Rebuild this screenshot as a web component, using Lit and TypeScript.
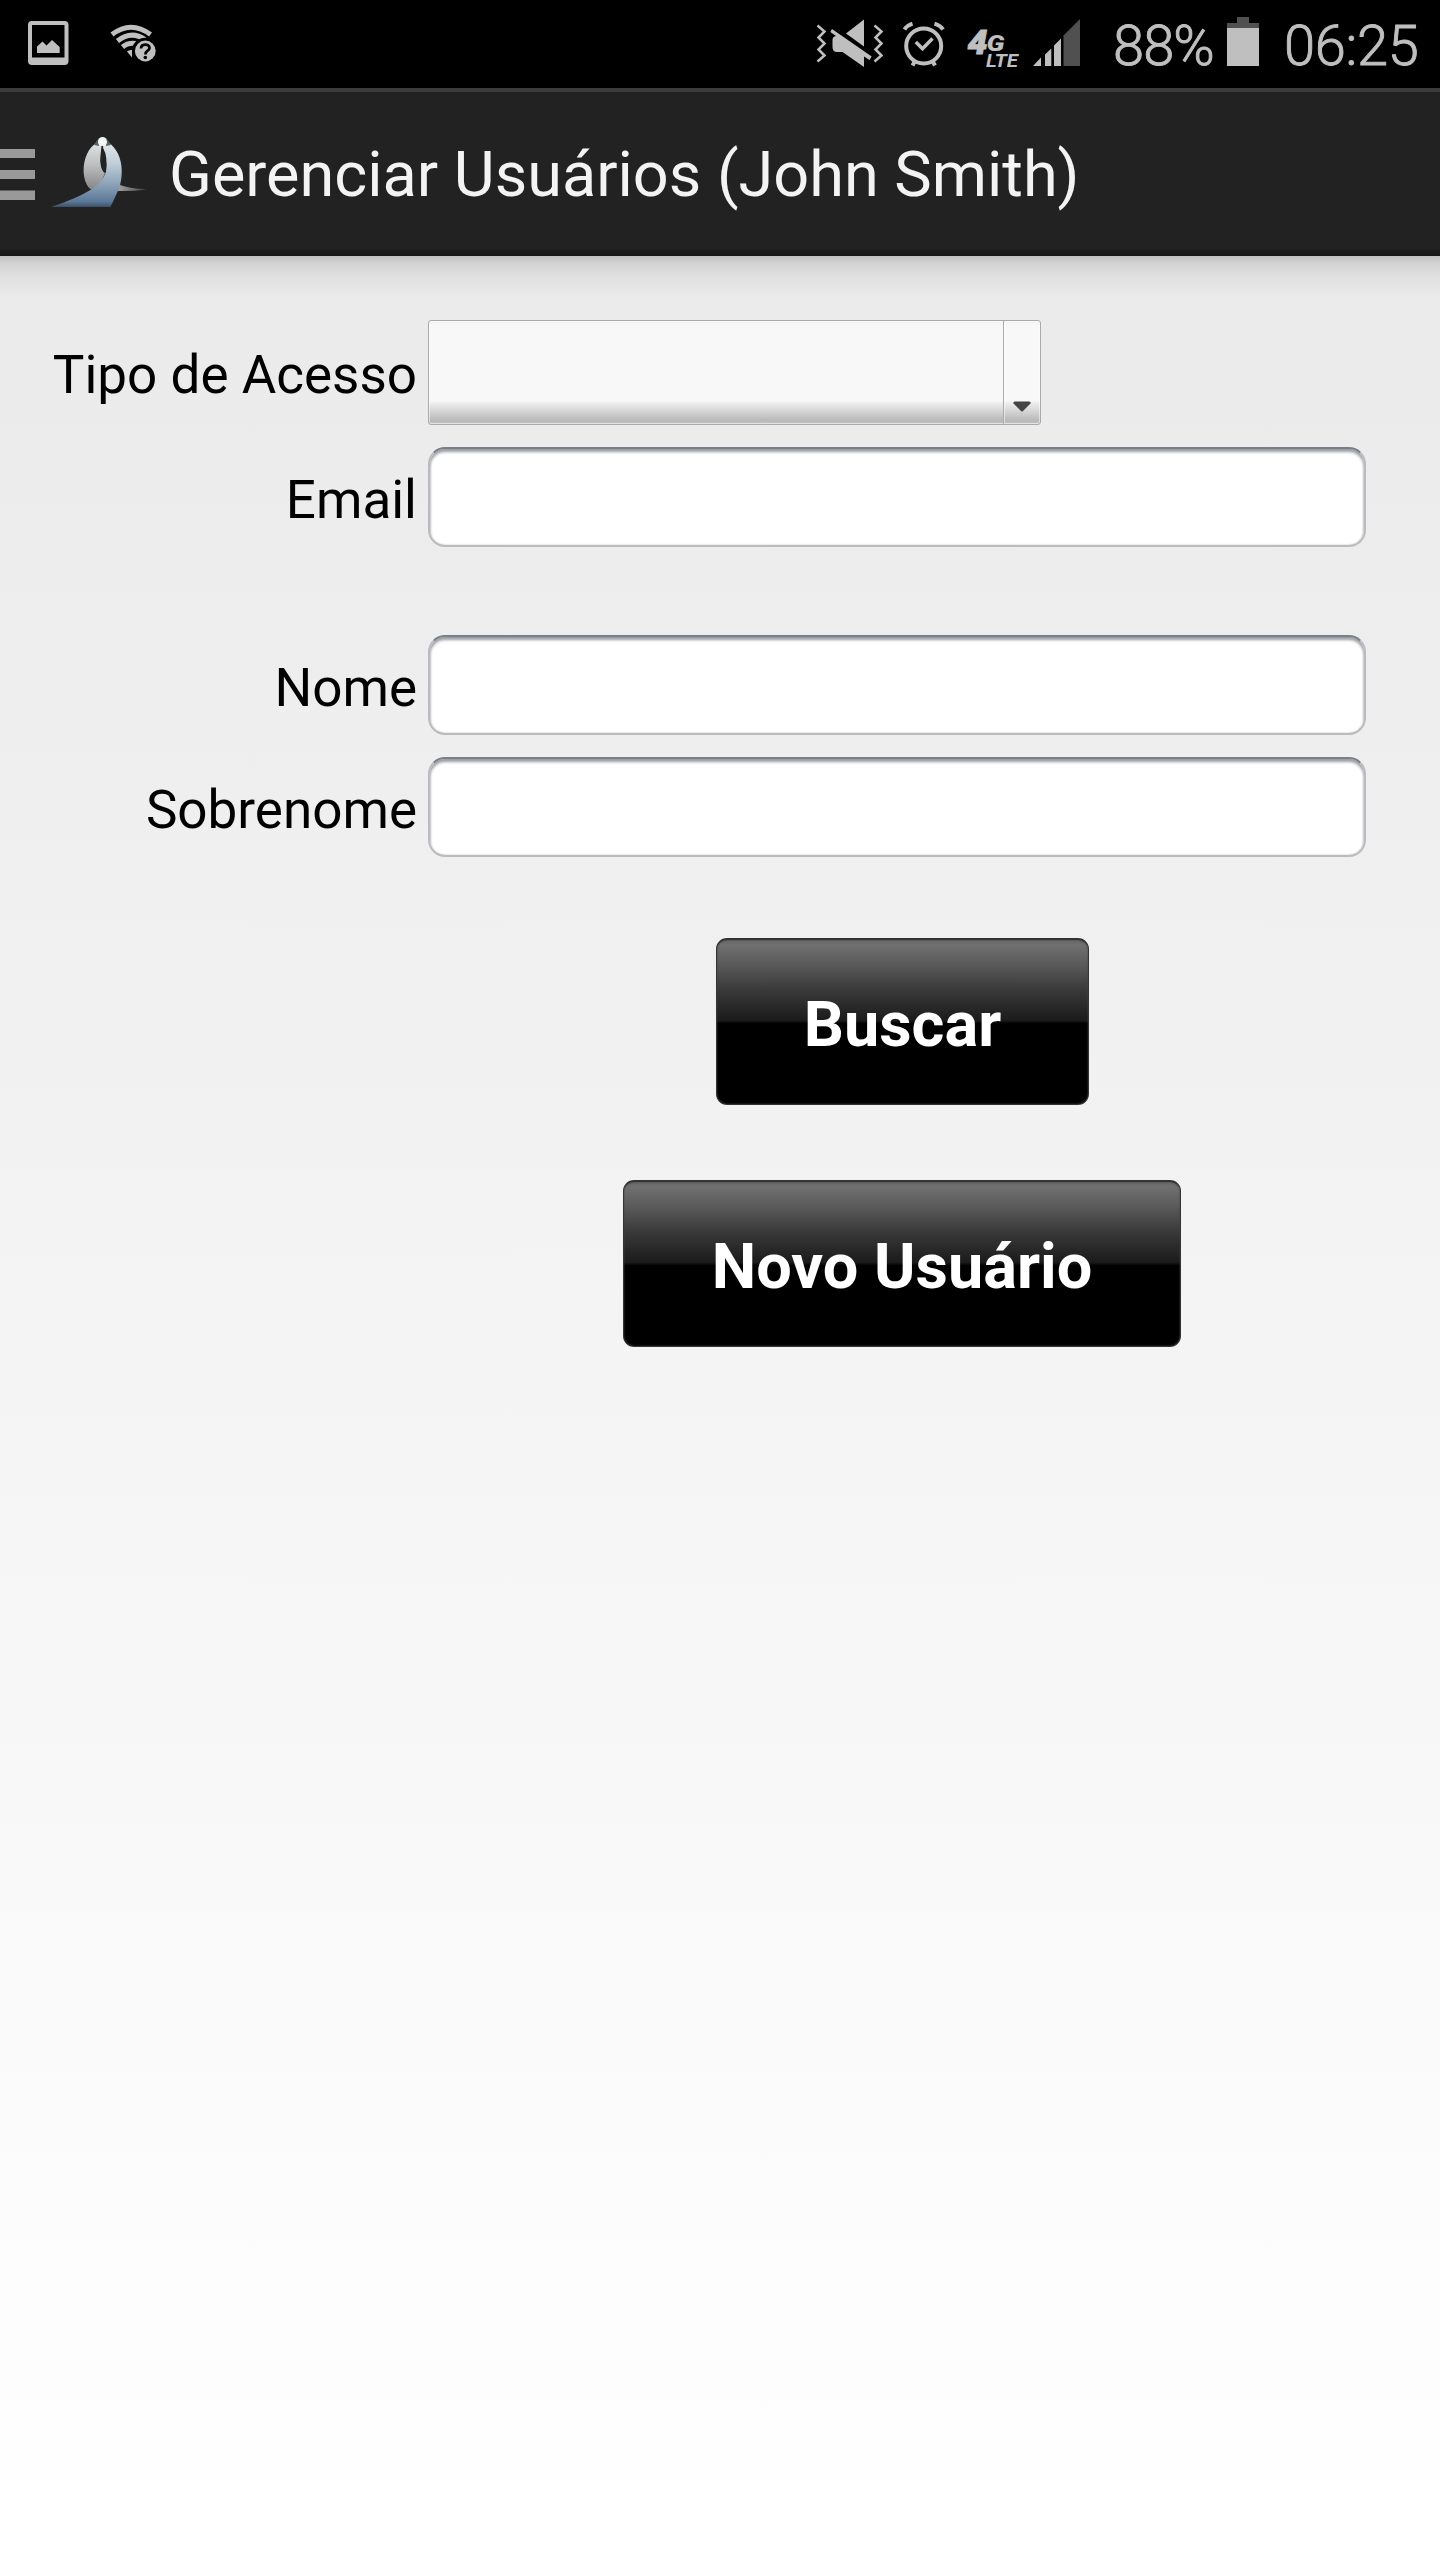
import { LitElement, html, css } from "lit";
import { customElement, property } from "lit/decorators.js";

@customElement("status-bar")
class StatusBar extends LitElement {
  static styles = css`
    :host { display: flex; height: 88px; box-sizing: border-box; background: #000; color: #bfbfbf; align-items: flex-start; justify-content: space-between; font-family: Roboto, sans-serif; }
    .side { display: flex; height: 88px; }
    .readout { font-size: 56px; line-height: 88px; white-space: nowrap; padding-top: 2px; font-weight: 300; box-sizing: border-box; -webkit-text-stroke: 0.9px #bfbfbf; }
    .level { width: 102px; margin-left: 12px; padding-left: 3px; letter-spacing: -0.9px; }
    .clock { width: 156px; letter-spacing: -0.3px; }
    svg { display: block; flex: none; }
    .net { font-family: Roboto, sans-serif; font-weight: 900; font-style: italic; }
  `;

  render() {
    return html`
      <div class="side">
        <svg width="170" height="88" viewBox="0 0 170 88">
          <rect x="30" y="23" width="36.5" height="40" rx="2" fill="none" stroke="#bfbfbf" stroke-width="4"/>
          <path d="M30 57.5H67V62a2 2 0 0 1-2 2H32a2 2 0 0 1-2-2Z" fill="#bfbfbf"/>
          <path d="M37 53V46.5L42.5 41.5L46.5 45.5L52 40L59.700 47V53Z" fill="#bfbfbf"/>
          <g fill="none" stroke="#bfbfbf" stroke-width="5">
            <path d="M112 34.500Q131 20 150.500 34.500"/>
            <path d="M117.500 41Q131 30 145 39.500"/>
            <path d="M122.500 47Q128 42.300 136 43.500"/>
          </g>
          <path d="M127 51.500Q129 49.500 132 50V57.500Z" fill="#bfbfbf"/>
          <circle cx="145.300" cy="51" r="13.300" fill="#000"/>
          <circle cx="145.300" cy="51" r="10.400" fill="#bfbfbf"/>
          <path d="M141 48.500C141 43.500 149.500 43.500 149.500 48C149.500 51 145.400 50.500 145.400 54.500" fill="none" stroke="#000" stroke-width="2.700"/>
          <circle cx="145.300" cy="57.500" r="1.800" fill="#000"/>
        </svg>
      </div>
      <div class="side">
        <svg width="288" height="88" viewBox="810 0 288 88">
          <g fill="none" stroke="#bfbfbf" stroke-width="2.500">
            <path d="M817.500 25.500L824.500 31.500L818.500 37.500L824.500 43.500L818.500 49.500L824.500 55.500L817.500 61.500"/>
            <path d="M874.500 25.500L881.500 31.500L875.500 37.500L881.500 43.500L875.500 49.500L881.500 55.500L874.500 61.500"/>
          </g>
          <path d="M846 33.500L864 19.500V46.500Z" fill="#bfbfbf"/>
          <path d="M832 29L871.700 56.500L869.500 60L864 56.500V67L842.500 52H837Q832.500 52 832.500 47V40Q832.500 36.500 836 36L830.300 32Z" fill="#bfbfbf"/>
          <g fill="none" stroke="#bfbfbf">
            <circle cx="923.700" cy="46" r="17.500" stroke-width="4"/>
            <path d="M904.500 29.500Q907 25.500 912.500 23.700M943 29.500Q940.500 25.500 934.500 23.700" stroke-width="4"/>
            <path d="M915 61L912.500 65.500M932.500 61L935 65.500" stroke-width="4"/>
            <path d="M915.800 42L922.500 48.700L932.500 38.500" stroke-width="3.500"/>
          </g>
          <g class="net" fill="#bfbfbf">
            <text x="967.500" y="53.500" font-size="34" textLength="20" lengthAdjust="spacingAndGlyphs" stroke="#bfbfbf">4</text>
            <text x="986.500" y="50.500" font-size="22" textLength="18" lengthAdjust="spacingAndGlyphs">G</text>
            <text x="986" y="67" font-size="18.500" font-weight="700" textLength="32" lengthAdjust="spacingAndGlyphs">LTE</text>
          </g>
          <path d="M1033 66L1041 57.500V66ZM1045 54.500L1051.300 48.500V66H1045ZM1054 45.500L1061 38.500V66H1054Z" fill="#bfbfbf"/>
          <path d="M1063.500 35.500L1080 19V66H1063.500Z" fill="#505050"/>
        </svg>
        <div class="readout level">88%</div>
        <svg width="72" height="88" viewBox="1212 0 72 88">
          <path d="M1237 17H1249V23H1259V28H1227V23H1237Z" fill="#505050"/>
          <path d="M1227 28H1259V66H1227Z" fill="#bfbfbf"/>
        </svg>
        <div class="readout clock">06:25</div>
      </div>
    `;
  }
}

@customElement("action-bar")
class ActionBar extends LitElement {
  @property() heading = "";

  static styles = css`
    :host { display: flex; height: 168px; box-sizing: border-box; background: linear-gradient(#3c3c3c 0 4px, #222 4px 161px, #1b1b1b 163px 166px, #151515); font-family: Roboto, sans-serif; }
    svg { display: block; flex: none; }
    .heading { font-size: 63px; line-height: 168px; color: #f3f3f3; white-space: nowrap; padding-top: 3px; box-sizing: border-box; }
  `;

  render() {
    return html`
      <svg width="169" height="168" viewBox="0 88 169 168">
        <defs>
          <linearGradient id="robe" x1="0" y1="0" x2="0" y2="1">
            <stop offset="0" stop-color="#e6eaec"/>
            <stop offset=".35" stop-color="#c0ced9"/>
            <stop offset=".7" stop-color="#849cb3"/>
            <stop offset=".92" stop-color="#5a7898"/>
            <stop offset="1" stop-color="#3c5066"/>
          </linearGradient>
          <linearGradient id="wing" x1="0" y1="0" x2="0" y2="1">
            <stop offset="0" stop-color="#e4e8e8"/>
            <stop offset=".5" stop-color="#bcbec0"/>
            <stop offset="1" stop-color="#858486"/>
          </linearGradient>
          <linearGradient id="tail" x1="0" y1="0" x2="1" y2="0">
            <stop offset="0" stop-color="#aaa"/>
            <stop offset="1" stop-color="#444"/>
          </linearGradient>
        </defs>
        <path d="M0 149H35V158H0ZM0 170H35V179H0ZM0 190.500H35V200H0Z" fill="#999"/>
        <path d="M117 184Q129 188.500 147 189.500Q132 191.500 115 191Z" fill="url(#tail)"/>
        <path d="M102 140C79 148 80 184 92 190Q101 185 105 173C98 168 101 154 102 140Z" fill="url(#wing)"/>
        <path d="M104 140C126 150 124 180 117 193L110.500 207H51Q78 198 92 189Q102 182 106 172Q108 156 103 148Z" fill="url(#robe)"/>
        <path d="M102.500 147Q98 162 103.500 171.500Q107 174 106 162Q105 153 102.500 147Z" fill="#222"/>
        <path d="M94 145L98 139L99 146ZM106 146L107 139L111 145Z" fill="#5c6264"/>
        <circle cx="102.500" cy="141.500" r="4.500" fill="#f4f6f6"/>
      </svg>
      <div class="heading">${this.heading}</div>
    `;
  }
}

@customElement("form-row")
class FormRow extends LitElement {
  @property() label = "";
  @property() kind = "text";

  static styles = css`
    :host { display: grid; grid-template-columns: 417px 938px; column-gap: 11px; font-family: Roboto, sans-serif; }
    .label { text-align: right; font-size: 53px; line-height: 100px; height: 100px; color: #000; white-space: nowrap; padding-top: 3px; box-sizing: border-box; }
    .label.select { padding-top: 5px; }
    .field { height: 100px; border-radius: 17px; box-sizing: border-box; background: #fff; border: 2px solid #b9bbbe; border-top-color: #7b7e86; box-shadow: inset 0 3px 3px #999ca2, inset 0 0 2px #bbb; }
    .picker { display: flex; width: 613px; height: 105px; box-sizing: border-box; border: 1px solid #aaa; border-radius: 3px; background: linear-gradient(#f1f1f1 0, #f8f8f8 4px 77%, #ececec 80%, #b8b8b8 97%, #c8c8c8); box-shadow: inset 0 0 0 1px #ffffff80; }
    .value { flex: 1; border-right: 1px solid #aaa; }
    .toggle { width: 36px; display: flex; align-items: flex-end; justify-content: center; padding-bottom: 12px; box-sizing: border-box; box-shadow: inset 1px 0 #ffffff80; }
  `;

  render() {
    return html`
      <div class="label ${this.kind}">${this.label}</div>
      ${this.kind === "select"
        ? html`<div class="picker">
            <div class="value"></div>
            <div class="toggle">
              <svg width="18" height="11" viewBox="0 0 18 11"><path d="M1.500 .5H16.500L17.500 1.500V2.500L9.500 10.500H8.500L.5 2.500V1.500Z" fill="#444"/></svg>
            </div>
          </div>`
        : html`<div class="field"></div>`}
    `;
  }
}

@customElement("glossy-button")
class GlossyButton extends LitElement {
  static styles = css`
    :host { display: flex; align-items: center; justify-content: center; height: 167px; box-sizing: border-box; border-radius: 11px; border: 1px solid #333; border-top: 2px solid #333; background: linear-gradient(#666 0, #707070 3%, #5a5a5a 15%, #3a3a3a 30%, #1b1b1b 49%, #000 51%); box-shadow: inset 0 0 2px #444; color: #fff; font: 700 63px/80px Roboto, sans-serif; white-space: nowrap; }
    .caption { padding-top: 6px; }
  `;

  render() {
    return html`<span class="caption"><slot></slot></span>`;
  }
}

@customElement("app-root")
class AppRoot extends LitElement {
  static styles = css`
    :host { display: flex; flex-direction: column; width: 1440px; height: 2560px; overflow: hidden; }
    .page { flex: 1; padding-top: 64px; background: linear-gradient(#0000002e 0, #0000001a 7px, #0000000c 20px, #0000 40px), linear-gradient(#eaeaea, #fff); }
    .gap-access { margin-bottom: 22px; }
    .gap-email { margin-bottom: 88px; }
    .gap-name { margin-bottom: 22px; }
    .actions { display: flex; flex-direction: column; align-items: center; gap: 75px; width: 1356px; margin-top: 81px; padding-left: 449px; box-sizing: border-box; }
    .search { width: 373px; }
    .create { width: 558px; margin-right: 1px; }
  `;

  render() {
    return html`
      <status-bar></status-bar>
      <action-bar heading="Gerenciar Usuários (John Smith)"></action-bar>
      <div class="page">
        <form-row class="gap-access" label="Tipo de Acesso" kind="select"></form-row>
        <form-row class="gap-email" label="Email"></form-row>
        <form-row class="gap-name" label="Nome"></form-row>
        <form-row label="Sobrenome"></form-row>
        <div class="actions">
          <glossy-button class="search">Buscar</glossy-button>
          <glossy-button class="create">Novo Usuário</glossy-button>
        </div>
      </div>
    `;
  }
}
